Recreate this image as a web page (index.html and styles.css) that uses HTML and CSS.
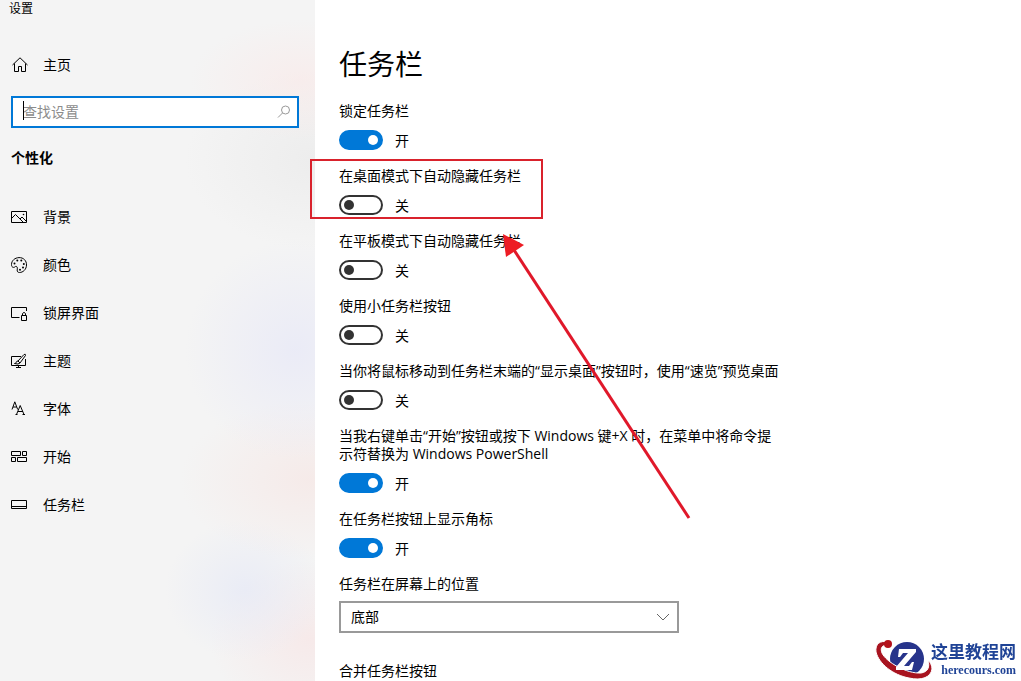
FILE: index.html
```html
<!DOCTYPE html>
<html lang="zh-CN">

<head>
    <meta charset="UTF-8">
    <meta name="viewport" content="width=device-width, initial-scale=1.0">
    <title>设置</title>
    <link rel="stylesheet" href="styles.css">
</head>

<body>
    <div class="window">
        <aside class="sidebar">
            <div class="window-title">设置</div>

            <a href="#" class="nav-link home">
                <svg class="icon" viewBox="0 0 17 17"><path d="M1.5 8 L9 .8 L16.5 8 M3.5 6.5 V14.5 H7.5 V9.5 H10.5 V14.5 H14.5 V6.5"/></svg>
                <span>主页</span>
            </a>

            <div class="search">
                <input type="text" id="search" placeholder="查找设置" aria-label="查找设置">
                <span class="caret"></span>
                <svg class="search-icon" viewBox="0 0 14 14"><circle cx="8.5" cy="5" r="4"/><path d="M5.5 8 L1 12.5"/></svg>
            </div>

            <h2>个性化</h2>

            <nav>
                <a href="#" class="nav-link">
                    <svg class="icon" viewBox="0 0 17 17"><path d="M.5 2.5 H15.5 V13.5 H.5 Z M.5 9.5 L4.5 5.5 L12 13 M9 10 L11 8 L15.5 12.5"/><circle class="dot" cx="12.5" cy="5.5" r=".8"/></svg>
                    <span>背景</span>
                </a>
                <a href="#" class="nav-link">
                    <svg class="icon" viewBox="0 0 17 17"><path d="M8 .6 C12.5 .4 15.7 3.8 15.5 8 C15.4 12.5 12 15.5 8.5 15.5 C6.8 15.5 6 14.5 6.2 13 C6.4 11.5 6.6 9.8 5.3 9.4 C4 9.1 3.8 10.6 2.5 10.4 C1 10.2 .5 9.2 .5 7.5 C.6 3.5 3.8 .8 8 .6 Z"/><g class="dot"><circle cx="3.5" cy="6.5" r="1"/><circle cx="6.3" cy="3.6" r="1"/><circle cx="10.3" cy="3.6" r="1"/><circle cx="12.8" cy="7" r="1"/><circle cx="12" cy="10.6" r="1"/><circle cx="9" cy="12.7" r="1"/></g></svg>
                    <span>颜色</span>
                </a>
                <a href="#" class="nav-link">
                    <svg class="icon" viewBox="0 0 17 17"><path d="M15.5 6 V2.5 H.5 V12.5 H8.5 M10.5 10.5 H15.5 V15.5 H10.5 Z M11.5 10.5 V8.5 Q13 6.2 14.5 8.5 V10.5"/></svg>
                    <span>锁屏界面</span>
                </a>
                <a href="#" class="nav-link">
                    <svg class="icon" viewBox="0 0 17 17"><path d="M10 3.5 H.5 V12.5 H14.5 V6 M7.5 12.5 V14.5 M5 14.5 H10 M7 8 L13 1.5 Q14.8 .6 14.5 2.5 L9 10 Z M7 8 Q5.6 7.8 5.2 9.4 Q4.9 10.5 3.5 10.5 Q7.5 11.8 9 10"/></svg>
                    <span>主题</span>
                </a>
                <a href="#" class="nav-link">
                    <svg class="icon" viewBox="0 0 17 17"><path d="M1 8.5 L3.8 .8 L6.7 8.5 M2 6 H5.7 M5.5 13.5 L9.2 4.5 L13 13.5 M7 10.5 H12 M4.5 13.5 H6.5 M11.5 13.5 H14"/></svg>
                    <span>字体</span>
                </a>
                <a href="#" class="nav-link">
                    <svg class="icon" viewBox="0 0 17 17"><path d="M.5 2.5 H9.5 V6.5 H.5 Z M11.5 2.5 H15.5 V6.5 H11.5 Z M.5 8.5 H4.5 V12.5 H.5 Z M6.5 8.5 H15.5 V12.5 H6.5 Z"/></svg>
                    <span>开始</span>
                </a>
                <a href="#" class="nav-link">
                    <svg class="icon" viewBox="0 0 17 17"><path d="M.5 3.5 H15.5 V11.5 H.5 Z M.5 9.5 H15.5"/></svg>
                    <span>任务栏</span>
                </a>
            </nav>
        </aside>

        <main>
            <h1>任务栏</h1>

            <div class="setting">
                <label for="lock">锁定任务栏</label>
                <div class="control">
                    <input type="checkbox" role="switch" class="toggle" id="lock" checked>
                    <span class="state"></span>
                </div>
            </div>

            <div class="setting marked">
                <label for="hideDesktop">在桌面模式下自动隐藏任务栏</label>
                <div class="control">
                    <input type="checkbox" role="switch" class="toggle" id="hideDesktop">
                    <span class="state"></span>
                </div>
                <div class="mark-box"></div>
                <svg class="mark-arrow" viewBox="0 0 194 291">
                    <path class="shaft" d="M15 19 L190 287"/>
                    <path class="head" d="M4 3 L25 14 L7 26 Z"/>
                </svg>
            </div>

            <div class="setting">
                <label for="hideTablet">在平板模式下自动隐藏任务栏</label>
                <div class="control">
                    <input type="checkbox" role="switch" class="toggle" id="hideTablet">
                    <span class="state"></span>
                </div>
            </div>

            <div class="setting">
                <label for="small">使用小任务栏按钮</label>
                <div class="control">
                    <input type="checkbox" role="switch" class="toggle" id="small">
                    <span class="state"></span>
                </div>
            </div>

            <div class="setting">
                <label for="peek">当你将鼠标移动到任务栏末端的“显示桌面”按钮时，使用“速览”预览桌面</label>
                <div class="control">
                    <input type="checkbox" role="switch" class="toggle" id="peek">
                    <span class="state"></span>
                </div>
            </div>

            <div class="setting">
                <label for="powershell">当我右键单击“开始”按钮或按下 Windows 键+X 时，在菜单中将命令提示符替换为 Windows PowerShell</label>
                <div class="control">
                    <input type="checkbox" role="switch" class="toggle" id="powershell" checked>
                    <span class="state"></span>
                </div>
            </div>

            <div class="setting">
                <label for="badges">在任务栏按钮上显示角标</label>
                <div class="control">
                    <input type="checkbox" role="switch" class="toggle" id="badges" checked>
                    <span class="state"></span>
                </div>
            </div>

            <div class="setting dropdown">
                <label for="position">任务栏在屏幕上的位置</label>
                <div class="select-wrap">
                    <select id="position">
                        <option>底部</option>
                        <option>顶部</option>
                        <option>靠左</option>
                        <option>靠右</option>
                    </select>
                    <svg class="chevron" viewBox="0 0 14 8"><path d="M1 1 L7 7 L13 1"/></svg>
                </div>
            </div>

            <div class="setting">
                <div class="label">合并任务栏按钮</div>
            </div>
        </main>
    </div>

    <div class="watermark">
        <svg class="logo" viewBox="0 0 58 40">
            <circle cx="32" cy="19" r="17" fill="#27348b"/>
            <path d="M13 2 C5 0 0 4 1 12 C4 24 18 35 34 38 C47 41 56 37 57 29 C57 25 55 22 53 20 C55 27 53 32 46 33 C32 34 11 22 7 13 C5 8 7 5 13 5 Z" fill="#a81420" stroke="#fff" stroke-width="1"/>
            <circle cx="13" cy="4" r="4" fill="#b5121b"/>
            <path d="M24 9 H41 V12 L29 26 H34 L37 22 H39 L37 30 H21 V27 L33 13 H28 L25 17 H23 Z" fill="#fff"/>
        </svg>
        <div class="watermark-text">
            <strong>这里教程网</strong>
            <span>herecours.com</span>
        </div>
    </div>
</body>

</html>
```
FILE: styles.css
```css
* {
    margin: 0;
    padding: 0;
    box-sizing: border-box;
}

body {
    font-family: "Open Sans", "Noto Sans CJK SC", sans-serif;
    font-size: 14px;
    line-height: 18px;
    color: #000;
    background-color: #fff;
}

.window {
    display: flex;
    min-height: 100vh;
}

.sidebar {
    flex: 0 0 315px;
    padding: 0 16px 0 11px;
    background:
        radial-gradient(ellipse 110px 60px at 300px 80px, rgba(250, 232, 231, 0.6), transparent),
        radial-gradient(ellipse 130px 90px at 315px 160px, rgba(232, 232, 232, 0.6), transparent),
        radial-gradient(ellipse 110px 110px at 295px 350px, rgba(232, 233, 247, 0.8), transparent),
        radial-gradient(ellipse 130px 80px at 310px 480px, rgba(246, 232, 230, 0.8), transparent),
        radial-gradient(ellipse 80px 70px at 245px 590px, rgba(231, 234, 246, 0.8), transparent),
        radial-gradient(ellipse 100px 80px at 310px 640px, rgba(247, 231, 231, 0.8), transparent),
        #f4f4f4;
}

.window-title {
    font-size: 12px;
    margin-left: -2px;
}

.nav-link {
    display: flex;
    align-items: center;
    gap: 15px;
    height: 48px;
    color: #000;
    text-decoration: none;
}

.nav-link.home {
    margin-top: 23px;
    margin-bottom: 7px;
}

.icon {
    width: 17px;
    height: 17px;
    fill: none;
    stroke: #000;
    stroke-width: 1;
}

.icon .dot {
    fill: #000;
    stroke: none;
}

.search {
    position: relative;
}

.search input {
    display: block;
    width: 100%;
    height: 32px;
    padding: 0 32px 2px 10px;
    border: 2px solid #0078d7;
    background-color: #fff;
    font: inherit;
    outline: none;
}

.search input::placeholder {
    color: #8c8c8c;
    opacity: 1;
}

.caret {
    position: absolute;
    left: 12px;
    top: 5px;
    width: 1px;
    height: 19px;
    background-color: #000;
}

.search-icon {
    position: absolute;
    right: 8px;
    top: 9px;
    width: 14px;
    height: 14px;
    fill: none;
    stroke: #999;
}

h2 {
    margin-top: 21px;
    margin-bottom: 26px;
    font-size: 14px;
    line-height: 18px;
    font-weight: 700;
}

main {
    flex: 1;
    padding: 46px 24px 0;
}

h1 {
    margin-bottom: 20px;
    font-size: 28px;
    line-height: 36px;
    font-weight: 400;
}

.setting {
    max-width: 445px;
    margin-bottom: 17px;
}

.setting:last-child {
    margin-bottom: 0;
}

.setting label,
.setting .label {
    display: block;
}

.control {
    display: flex;
    align-items: center;
    gap: 12px;
    height: 20px;
    margin-top: 10px;
}

.toggle {
    appearance: none;
    display: flex;
    align-items: center;
    width: 44px;
    height: 20px;
    padding: 0 3px;
    border: 2px solid #333;
    border-radius: 10px;
    background-color: #fff;
}

.toggle::before {
    content: "";
    width: 10px;
    height: 10px;
    border-radius: 50%;
    background-color: #333;
}

.toggle:checked {
    justify-content: flex-end;
    border-color: #0078d7;
    background-color: #0078d7;
}

.toggle:checked::before {
    background-color: #fff;
}

.state {
    padding-top: 2px;
}

.state::before {
    content: "关";
}

.toggle:checked + .state::before {
    content: "开";
}

.dropdown {
    margin-bottom: 29px;
}

.select-wrap {
    position: relative;
    max-width: 340px;
    margin-top: 8px;
}

select {
    appearance: none;
    display: block;
    width: 100%;
    height: 32px;
    padding: 0 32px 0 10px;
    border: 2px solid #999;
    border-radius: 0;
    background-color: #fff;
    color: #000;
    font: inherit;
}

.chevron {
    position: absolute;
    right: 9px;
    top: 12px;
    width: 14px;
    height: 8px;
    fill: none;
    stroke: #666;
    pointer-events: none;
}

/* red annotations drawn over the page */
.marked {
    position: relative;
    z-index: 1;
}

.mark-box {
    position: absolute;
    left: -29px;
    top: -8px;
    width: 233px;
    height: 60px;
    border: 2px solid #d9222c;
    pointer-events: none;
}

.mark-arrow {
    position: absolute;
    left: 160px;
    top: 64px;
    width: 194px;
    height: 291px;
    pointer-events: none;
}

.mark-arrow .shaft {
    stroke: #e0182a;
    stroke-width: 3;
}

.mark-arrow .head {
    fill: #ed1c24;
}

.watermark {
    position: fixed;
    right: 5px;
    bottom: 1px;
    display: flex;
    align-items: center;
    color: #1f4396;
}

.logo {
    width: 58px;
    height: 40px;
}

.watermark-text {
    display: flex;
    flex-direction: column;
    align-items: flex-end;
    margin-left: -2px;
}

.watermark-text strong {
    font-size: 17px;
    line-height: 20px;
}

.watermark-text span {
    font-family: "Liberation Serif", serif;
    font-size: 12px;
    line-height: 16px;
    font-weight: 700;
}
```
